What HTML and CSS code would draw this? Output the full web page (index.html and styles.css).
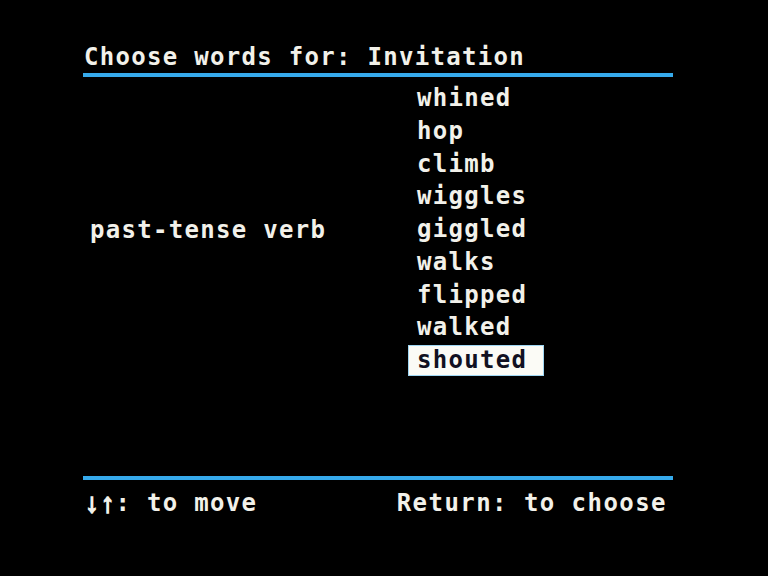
FILE: index.html
```html
<!DOCTYPE html>
<html>
<head>
<meta charset="utf-8">
<link rel="stylesheet" href="styles.css">
</head>
<body>
<div class="screen">
  <div class="header">Choose words for: Invitation</div>
  <div class="body">
    <div class="label">past-tense verb</div>
    <ul class="words">
      <li>whined</li>
      <li>hop</li>
      <li>climb</li>
      <li>wiggles</li>
      <li>giggled</li>
      <li>walks</li>
      <li>flipped</li>
      <li>walked</li>
      <li><span class="selected">shouted</span></li>
    </ul>
  </div>
  <div class="footer">
    <span><span class="arrow">↓</span><span class="arrow">↑</span>: to move</span>
    <span class="right">Return: to choose</span>
  </div>
</div>
</body>
</html>
```
FILE: styles.css
```css
html, body {
  margin: 0;
  padding: 0;
  background: #000;
}
body {
  width: 768px;
  height: 576px;
  overflow: hidden;
  color: #f2f1ea;
  font-family: "DejaVu Sans Mono", "Liberation Mono", monospace;
  font-weight: bold;
  font-size: 24px;
  letter-spacing: 1.3px;
}
.screen {
  padding: 41px 95px 0 83px;
}
.header {
  line-height: 32px;
  padding-left: 1px;
  border-bottom: 4px solid #36aaec;
}
.body {
  display: flex;
  align-items: center;
  margin-top: 5px;
  height: 295px;
}
.label {
  width: 327px;
  padding-left: 7px;
  line-height: 32px;
}
.words {
  list-style: none;
  margin: 0;
  padding: 0;
}
.words li {
  height: 32.75px;
  line-height: 32.75px;
}
.selected {
  display: inline-block;
  line-height: 29px;
  margin-left: -9px;
  padding: 0 16px 0 8px;
  background: #fbfbf6;
  color: #111122;
  border: 1px solid #9fd6f2;
}
.footer {
  margin-top: 99px;
  border-top: 4px solid #36aaec;
  padding-top: 7px;
  display: flex;
  justify-content: space-between;
  line-height: 32px;
  padding-left: 1px;
  padding-right: 6px;
}
.arrow {
  display: inline-block;
  width: 15.75px;
  text-align: center;
  font-family: "Liberation Sans", sans-serif;
  font-size: 27px;
  letter-spacing: 0;
  line-height: 32px;
  vertical-align: top;
  -webkit-text-stroke: 1.6px currentColor;
}
.right {
  letter-spacing: 1.45px;
}
```
